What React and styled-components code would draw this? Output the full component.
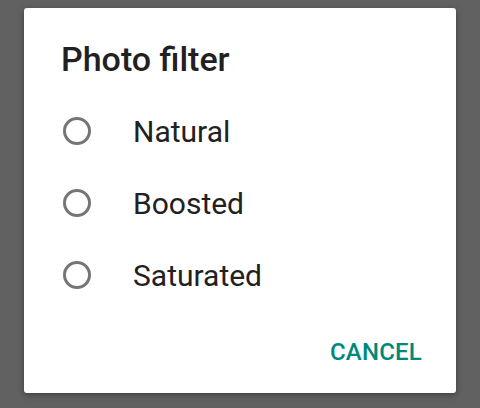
import React, { useState } from "react";
import styled, { createGlobalStyle } from "styled-components";

const GlobalStyle = createGlobalStyle`
  html, body {
    margin: 0;
    padding: 0;
    background: #616161;
  }
  body {
    font-family: Roboto, "Noto Sans", sans-serif;
  }
`;

const Backdrop = styled.div`
  width: 480px;
  height: 408px;
  box-sizing: border-box;
  padding: 8px 24px 15px;
  display: flex;
`;

const Dialog = styled.div`
  flex: 1;
  background: #fff;
  border-radius: 3px;
  box-shadow: 0 2px 6px rgba(0, 0, 0, 0.35);
  display: flex;
  flex-direction: column;
  padding: 27px 0 0;
  box-sizing: border-box;
`;

const Title = styled.h2`
  margin: 0 0 12px 37px;
  font-size: 34px;
  font-weight: 500;
  line-height: 48px;
  color: #212121;
`;

const Options = styled.div`
  display: flex;
  flex-direction: column;
`;

const Option = styled.label`
  display: flex;
  align-items: center;
  height: 72px;
  padding-left: 39px;
  cursor: pointer;
`;

const Circle = styled.span`
  width: 22px;
  height: 22px;
  border-radius: 50%;
  border: 3px solid ${({ checked }) => (checked ? "#00897b" : "#757575")};
  display: flex;
  align-items: center;
  justify-content: center;
  &::after {
    content: "";
    width: 12px;
    height: 12px;
    border-radius: 50%;
    background: #00897b;
    display: ${({ checked }) => (checked ? "block" : "none")};
  }
`;

const OptionText = styled.span`
  margin-left: 42px;
  font-size: 30px;
  color: #212121;
`;

const Actions = styled.div`
  display: flex;
  justify-content: flex-end;
  padding: 27px 34px 0 0;
`;

const TextButton = styled.button`
  background: none;
  border: none;
  padding: 0;
  font-family: inherit;
  font-size: 24px;
  font-weight: 500;
  letter-spacing: 0.2px;
  color: #00897b;
  cursor: pointer;
`;

const filters = ["Natural", "Boosted", "Saturated"];

const App = () => {
  const [selected, setSelected] = useState(null);
  return (
    <>
      <GlobalStyle />
      <Backdrop>
        <Dialog>
          <Title>Photo filter</Title>
          <Options>
            {filters.map((name) => (
              <Option key={name} onClick={() => setSelected(name)}>
                <Circle checked={selected === name} />
                <OptionText>{name}</OptionText>
              </Option>
            ))}
          </Options>
          <Actions>
            <TextButton>CANCEL</TextButton>
          </Actions>
        </Dialog>
      </Backdrop>
    </>
  );
};

export default App;
